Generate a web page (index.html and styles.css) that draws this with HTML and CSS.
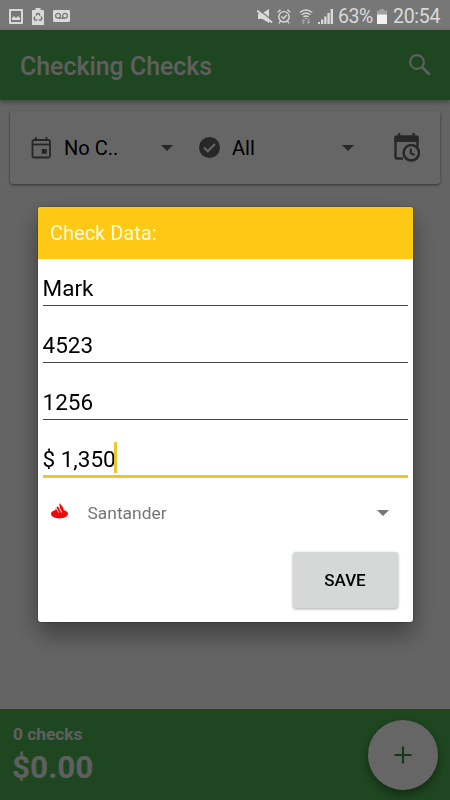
FILE: index.html
```html
<!DOCTYPE html>
<html lang="en">
<head>
    <meta charset="UTF-8">
    <meta name="viewport" content="width=device-width, initial-scale=1.0">
    <title>Checking Checks</title>
    <link rel="stylesheet" href="styles.css">
</head>
<body>
    <div class="status-bar">
        <div class="status-left">
            <svg width="14" height="15" viewBox="0 0 14 15"><path fill="#dadada" fill-rule="evenodd" d="M1 0h12a1 1 0 0 1 1 1v13a1 1 0 0 1-1 1H1a1 1 0 0 1-1-1V1a1 1 0 0 1 1-1zM2 2v11h10V2z"/><path fill="#dadada" d="M3 11V9l2-2 2 2 2-2 2 2v2z"/></svg>
            <svg width="12" height="17" viewBox="0 0 12 17"><path fill="#dadada" d="M3.5 0h5v2H11a1 1 0 0 1 1 1v14H0V3a1 1 0 0 1 1-1h2.5z"/><path fill="none" stroke="#777" stroke-width="1.5" d="M4 7.5L5.2 5.6h1.6L8 7.5M9 8.5l1 2L9 12H6.8M5.3 12H3l-1-1.5 1-2"/></svg>
            <svg width="17" height="12" viewBox="0 0 17 12"><rect width="17" height="12" rx="1.2" fill="#dadada"/><path fill="none" stroke="#777" stroke-width="1.3" d="M5 8.2h7"/><circle cx="5" cy="5.8" r="2.4" fill="none" stroke="#777" stroke-width="1.3"/><circle cx="12" cy="5.8" r="2.4" fill="none" stroke="#777" stroke-width="1.3"/></svg>
        </div>
        <div class="status-right">
            <svg width="16" height="15" viewBox="0 0 16 15"><path fill="#dadada" d="M1 4.5h4L12 0v14L5.5 10H1z"/><path stroke="#777" stroke-width="1.2" d="M1.5 0.3L15.5 11.8"/><path stroke="#dadada" stroke-width="2" d="M0 1.5L15 13.5"/></svg>
            <svg class="alarm" width="14" height="15" viewBox="0 0 14 15"><g fill="none" stroke="#dadada" stroke-width="1.4"><circle cx="7" cy="7.8" r="5.2"/><path d="M4.5 7.5l2 2 3.2-3.5M.7 3.2L3.6.8M13.3 3.2L10.400.8M3.500 12L2 14.500M10.500 12l1.500 2.500"/></g></svg>
            <svg class="wifi" width="14" height="15" viewBox="0 0 14 15"><g fill="none" stroke="#dadada" stroke-width="1.4"><path d="M.8 3.5q6.200-5 12.400 0M2.700 5.800q4.300-3.500 8.600 0M4.500 8q2.500-2 5 0"/></g><path fill="#dadada" d="M5.800 9h2.400L7 10.500z"/><path fill="#a8a8a8" d="M4.500 10l2 2H5.300v3H3.700v-3h-1.200zM9.500 15l2-2h-1.200v-3H8.700v3H7.500z"/></svg>
            <svg class="signal" width="15" height="15" viewBox="0 0 15 15"><path fill="#dadada" d="M0 13h2v2H0zM3 10.500h2.300V15H3zM6.200 7.500h2.300V15H6.200zM9.400 4h2.300v11H9.400zM12.600 0H15v15h-2.400z"/></svg>
            <span class="percent">63%</span>
            <svg class="battery" width="10" height="15" viewBox="0 0 10 15"><path fill="#a0a0a0" d="M3 0h4v1.500h3V6H0V1.500h3z"/><path fill="#f2f2f2" d="M0 5.500h10V15H0z"/></svg>
            <span class="clock">20:54</span>
        </div>
    </div>

    <div class="app">
        <header class="toolbar">
            <h1>Checking Checks</h1>
            <svg width="22" height="22" viewBox="0 0 22 22" fill="none" stroke="#ededed"><circle cx="8" cy="8" r="6.9" stroke-width="2.1"/><path d="M13 13l7.700 7.700" stroke-width="2.8"/></svg>
        </header>

        <main class="content">
            <div class="filters">
                <div class="filter filter-date">
                    <svg width="20" height="22" viewBox="0 0 20 22"><rect x="1.500" y="3" width="17.500" height="17.500" rx="1.500" fill="none" stroke="#616161" stroke-width="1.800"/><path d="M1.500 7.500H19" stroke="#616161" stroke-width="1.800"/><path d="M5 0v3M15.500 0v3" stroke="#616161" stroke-width="1.800"/><path fill="#616161" d="M10.800 12h5v4.800h-5z"/></svg>
                    <span>No C..</span>
                    <i class="arrow"></i>
                </div>
                <div class="filter filter-status">
                    <svg width="22" height="22" viewBox="0 0 22 22"><circle cx="11.500" cy="10.500" r="10.500" fill="#616161"/><path d="M6 10.500l3.800 3.800L17 7" fill="none" stroke="#fff" stroke-width="2"/></svg>
                    <span>All</span>
                    <i class="arrow"></i>
                </div>
                <svg class="schedule" width="27" height="29" viewBox="0 0 27 29"><path fill="none" stroke="#616161" stroke-width="2.400" d="M10 25.500H4A1.500 1.500 0 0 1 2.500 24V5A1.500 1.500 0 0 1 4 3.500h19A1.500 1.500 0 0 1 24.500 5v9"/><path fill="#616161" d="M1.500 3.500h24V9h-24zM5 0h2.200v4H5zM19.500 0h2.200v4h-2.200z"/><circle cx="18.300" cy="19.800" r="7.700" fill="#fff" stroke="#616161" stroke-width="2.500"/><path fill="none" stroke="#616161" stroke-width="2" d="M17.800 15.500v4.700l3.700 2"/></svg>
            </div>
        </main>

        <footer class="summary">
            <div>
                <p class="count">0 checks</p>
                <p class="total">$0.00</p>
            </div>
            <button class="add" aria-label="Add">
                <svg width="18" height="18" viewBox="0 0 18 18"><path d="M9 .5v17M.5 9h17" stroke="#388e3c" stroke-width="2.200"/></svg>
            </button>
        </footer>
    </div>

    <div class="overlay">
        <div class="dialog">
            <h2>Check Data:</h2>
            <form class="fields">
                <div class="field">Mark</div>
                <div class="field">4523</div>
                <div class="field">1256</div>
                <div class="field active">$ 1,350<i class="cursor"></i></div>
            </form>
            <div class="bank">
                <svg width="17" height="16" viewBox="0 0 17 16"><path fill="#e80c0c" d="M4.500 7C1.800 7.700 0 9 0 10.800 0 13.500 3.800 15.500 8.500 15.500S17 13.500 17 10.800C17 9 15.200 7.700 12.700 7c0-1.500-.6-2.400-1.400-3.700C10.400 2 9.200 1.500 9 0 7.900 1.500 8.200 3 9 4.300L6.400 3.500C5 4.500 4.500 5.500 4.500 7z"/><path fill="none" stroke="#fff" stroke-width="1" d="M5.400 4.500c0 2 1.700 3.500 2.500 5M7.800 2.500c0 2.500 2.200 4.500 2.800 7"/></svg>
                <span>Santander</span>
                <i class="arrow"></i>
            </div>
            <button class="save">SAVE</button>
        </div>
    </div>
</body>
</html>
```
FILE: styles.css
```css
* {
    margin: 0;
    padding: 0;
    box-sizing: border-box;
}

body {
    width: 450px;
    height: 800px;
    overflow: hidden;
    display: flex;
    flex-direction: column;
    font-family: Roboto, "Liberation Sans", sans-serif;
    background-color: #fafafa;
}

svg {
    display: block;
    flex-shrink: 0;
}

button {
    border: none;
    font-family: inherit;
    cursor: pointer;
}

.status-bar {
    height: 30px;
    padding: 2px 10px 0 9px;
    display: flex;
    justify-content: space-between;
    align-items: center;
    background-color: #777;
    color: #dadada;
}

.status-left {
    display: flex;
    align-items: center;
    gap: 9px;
}

.status-right {
    display: flex;
    align-items: center;
    font-size: 19.5px;
    line-height: 28px;
}

.status-right span {
    padding-top: 1px;
}

.alarm {
    margin-left: 4px;
}

.wifi {
    margin-left: 8px;
}

.signal {
    margin-left: 5px;
}

.percent {
    width: 35px;
    margin-left: 5px;
    letter-spacing: -0.5px;
}

.battery {
    margin-left: 4px;
}

.clock {
    width: 47px;
    margin-left: 6px;
    letter-spacing: -0.3px;
}

.app {
    flex: 1;
    display: flex;
    flex-direction: column;
}

.toolbar {
    height: 70px;
    padding: 2px 19px 0 20px;
    display: flex;
    justify-content: space-between;
    align-items: center;
    background-color: #4caf50;
    box-shadow: 0 2px 5px rgba(0, 0, 0, 0.35);
}

.toolbar h1 {
    font-size: 24.9px;
    font-weight: 500;
    color: #ededed;
}

.toolbar svg {
    margin-top: -3px;
}

.content {
    flex: 1;
    padding: 11px 10px;
}

.filters {
    height: 73px;
    padding: 0 20px;
    display: flex;
    align-items: center;
    background-color: #fff;
    border-radius: 3px;
    box-shadow: 0 1px 3px rgba(0, 0, 0, 0.5);
    font-size: 20px;
    color: #000;
}

.filter {
    display: flex;
    align-items: center;
}

.filter .arrow {
    margin-left: auto;
}

.filter-date {
    width: 142px;
    margin-left: 1px;
    gap: 13px;
}

.filter-status {
    width: 156px;
    margin-left: 25px;
    gap: 12px;
}

.schedule {
    margin-left: auto;
}

.arrow {
    border: 6px solid transparent;
    border-top-color: #616161;
    border-bottom: none;
}

.summary {
    height: 91px;
    padding: 0 12px;
    display: flex;
    justify-content: space-between;
    align-items: center;
    background-color: #4caf50;
    color: #ededed;
}

.count {
    padding: 3px 0 0 1px;
    font-size: 17.3px;
    font-weight: 700;
    line-height: 22px;
}

.total {
    padding-top: 2px;
    font-size: 31.5px;
    font-weight: 700;
    line-height: 42px;
}

.add {
    width: 70px;
    height: 70px;
    display: flex;
    justify-content: center;
    align-items: center;
    border-radius: 50%;
    background-color: #fff;
    box-shadow: 0 4px 8px rgba(0, 0, 0, 0.4);
}

.overlay {
    position: fixed;
    inset: 30px 0 0;
    padding-bottom: 2px;
    display: flex;
    justify-content: center;
    align-items: center;
    background-color: rgba(0, 0, 0, 0.6);
}

.dialog {
    width: 375px;
    height: 415px;
    display: flex;
    flex-direction: column;
    overflow: hidden;
    background-color: #fff;
    border-radius: 3px;
    box-shadow: 0 0 2px rgba(0, 0, 0, 0.5), 0 12px 24px rgba(0, 0, 0, 0.4);
}

.dialog h2 {
    height: 52px;
    padding: 0 12.5px;
    font-size: 20px;
    font-weight: 400;
    line-height: 53px;
    color: #fffbe0;
    background-color: #ffc815;
}

.fields {
    padding: 0 5px;
}

.field {
    height: 47px;
    margin-bottom: 10px;
    padding-top: 13px;
    display: flex;
    align-items: center;
    font-size: 22.5px;
    color: #000;
    border-bottom: 1px solid #444;
}

.field.active {
    height: 48px;
    margin-bottom: 0;
    border-bottom: 3px solid #e8c634;
}

.cursor {
    width: 3px;
    height: 31px;
    margin: -2px 0 0 -2px;
    background-color: #e8c634;
}

.bank {
    height: 70px;
    padding: 0 24px 0 13px;
    display: flex;
    align-items: center;
    font-size: 17.4px;
    color: #757575;
}

.bank svg {
    margin-top: -4px;
}

.bank span {
    margin-left: 20px;
}

.bank .arrow {
    margin-left: auto;
    border-top-color: #757575;
}

.save {
    width: 105px;
    height: 56px;
    margin: 4px 15px 0 auto;
    font-size: 17px;
    font-weight: 500;
    color: #000;
    background-color: #d6d7d7;
    border-radius: 3px;
    box-shadow: 0 1px 3px rgba(0, 0, 0, 0.35);
}
```
